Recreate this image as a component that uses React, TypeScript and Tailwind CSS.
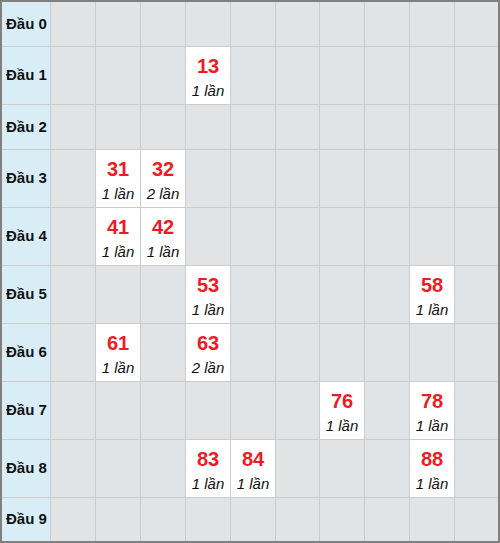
const counts: Record<string, number> = {
  '13': 1,
  '31': 1,
  '32': 2,
  '41': 1,
  '42': 1,
  '53': 1,
  '58': 1,
  '61': 1,
  '63': 2,
  '76': 1,
  '78': 1,
  '83': 1,
  '84': 1,
  '88': 1,
};

const heads = [0, 1, 2, 3, 4, 5, 6, 7, 8, 9];
const tails = [0, 1, 2, 3, 4, 5, 6, 7, 8, 9];

// column widths incl. right border; last column takes the rest
const colClass = (t: number) =>
  t === 9 ? 'flex-1' : t === 5 ? 'w-[44px] shrink-0 border-r border-[#cccccc]' : 'w-[45px] shrink-0 border-r border-[#cccccc]';

export default function App() {
  return (
    <div className="w-[500px] h-[543px] border-2 border-[#808080] bg-[#e2e3e5] font-['Liberation_Sans',Arial,sans-serif] text-[#111]">
      {heads.map((h) => {
        const hasData = tails.some((t) => counts[`${h}${t}`]);
        const last = h === 9;
        return (
          <div
            key={h}
            className={`flex ${last ? 'h-[43px]' : hasData ? 'h-[58px] border-b border-[#cccccc]' : 'h-[45px] border-b border-[#cccccc]'}`}
          >
            {/* label column */}
            <div className="w-[49px] shrink-0 border-r border-[#cccccc] bg-[#d9edf7] flex items-center pl-[4px] text-[15px] font-bold">
              Đầu {h}
            </div>
            {tails.map((t) => {
              const num = `${h}${t}`;
              const c = counts[num];
              return (
                <div
                  key={t}
                  className={`${colClass(t)} ${c ? 'bg-white' : ''} flex flex-col items-center pt-[7px]`}
                >
                  {c ? (
                    <>
                      <span className="text-[20px] leading-[24px] font-bold text-[#ec1c24]">{num}</span>
                      <span className="text-[15px] leading-[20px] italic mt-[3px]">{c} lần</span>
                    </>
                  ) : null}
                </div>
              );
            })}
          </div>
        );
      })}
    </div>
  );
}
